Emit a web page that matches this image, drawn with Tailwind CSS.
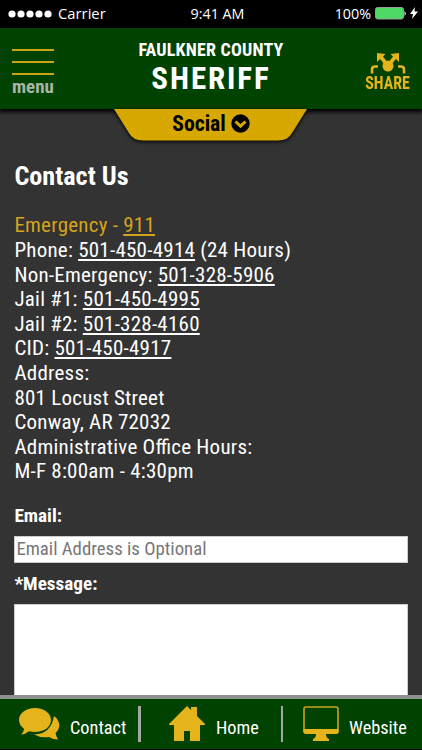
<!DOCTYPE html>
<html lang="en">

<head>
  <meta charset="UTF-8">
  <meta name="viewport" content="width=device-width, initial-scale=1.0">
  <title>Faulkner County Sheriff</title>
  <script src="https://cdn.jsdelivr.net/npm/@tailwindcss/browser@4"></script>
</head>

<body class="bg-[#333] text-white h-[750px] overflow-hidden flex flex-col font-['Roboto_Condensed','Roboto',sans-serif] [font-stretch:75%]">

  <!-- status bar -->
  <div class="h-7 shrink-0 bg-black grid grid-cols-3 items-center pl-2 pr-1 text-[15px] font-['Open_Sans',sans-serif] [font-stretch:100%]">
    <div class="flex items-center gap-[6px] whitespace-nowrap">
      <svg class="w-11 h-2" viewBox="0 0 44 8" fill="#fff">
        <circle cx="4" cy="4" r="3.6" /><circle cx="13" cy="4" r="3.6" /><circle cx="22" cy="4" r="3.6" /><circle cx="31" cy="4" r="3.6" /><circle cx="40" cy="4" r="3.6" />
      </svg>
      <span class="text-[14.8px] -mt-[2px]">Carrier</span>
    </div>
    <div class="text-center text-[14.3px] pl-[9px] whitespace-nowrap">9:41 AM</div>
    <div class="flex items-center justify-end gap-1 text-[14.3px]">
      <span class="-mt-px">100%</span>
      <svg class="w-[31px] h-[14px]" viewBox="0 0 31 14">
        <rect x=".5" y=".5" width="28" height="11.500" rx="2" fill="#4cd964" stroke="#9a9a9a" />
        <path d="M29.500 4q2.500 2.300 0 5z" fill="#fff" />
      </svg>
      <svg class="w-2 h-3 -mt-[2px]" viewBox="0 0 8 12"><path d="M5 0L0 7h3L2 12 8 4.500H4.500z" fill="#fff" /></svg>
    </div>
  </div>

  <!-- header -->
  <header class="relative h-[81px] shrink-0 bg-[#004200] flex justify-between shadow-[0_2px_4px_1px_#000] z-10">
    <div class="pl-3 pt-[21px] w-[70px]">
      <div class="w-[42px] h-[26px] border-y-2 border-[#c9a51c] flex items-center"><div class="w-full h-[2px] bg-[#c9a51c]"></div></div>
      <div class="text-[#a9b5a5] font-bold text-[19px] leading-5 mt-[2px]">menu</div>
    </div>
    <div class="text-center font-bold pt-3 whitespace-nowrap">
      <div class="text-[18px] leading-5 tracking-[.2px]">FAULKNER COUNTY</div>
      <div class="text-[31px] leading-9 tracking-[1.9px] pt-px">SHERIFF</div>
    </div>
    <div class="w-[70px] pt-6 pr-3 flex flex-col items-end">
      <svg class="w-11 h-[22px]" viewBox="0 0 44 22" fill="#e5b31b">
        <circle cx="22" cy="14" r="5.500" />
        <path d="M11 1l8.500 1-2.500 2.500 5 6.500-3 2-5-6-3 3zM33 1l-8.500 1 2.500 2.500-5 6.500 3 2 5-6 3 3z" />
        <path d="M6 21.500v-4q0-3 3-3h3M38 21.500v-4q0-3-3-3h-3" fill="none" stroke="#e5b31b" stroke-width="2.600" />
      </svg>
      <div class="text-[#e5b31b] font-bold text-[18.500px] leading-[18px] origin-right scale-x-[.86]">SHARE</div>
    </div>
    <!-- social tab -->
    <div class="absolute left-[113px] top-[81px] w-[196px] h-9">
      <svg class="absolute inset-0 w-[196px] h-9 drop-shadow-[0_1px_2px_#000]" viewBox="0 0 196 36">
        <path d="M1 0L16 24Q20 31.500 30 31.500H165Q175 31.500 179 24L194 0z" fill="#d7a900" />
      </svg>
      <div class="relative flex items-center justify-center gap-[5px] h-[30px] text-black font-bold text-[21.700px]">
        <span>Social</span>
        <svg class="w-[19px] h-[19px] -mt-[2px]" viewBox="0 0 19 19">
          <circle cx="9.500" cy="9.500" r="9.200" fill="#000" />
          <path d="M4.500 7.500l5 4.700 5-4.700" fill="none" stroke="#d7a900" stroke-width="3" />
        </svg>
      </div>
    </div>
  </header>

  <!-- content -->
  <main class="flex-1 min-h-0 overflow-hidden px-[14.400px] pt-[52px]">
    <h1 class="font-bold text-[26.200px] leading-[30px]">Contact Us</h1>
    <div class="mt-[22.400px] text-[21px] leading-[24.600px] tracking-[.24px] [font-feature-settings:'liga'] whitespace-nowrap">
      <p class="text-[#d5a41d]">Emergency - <a class="underline">911</a></p>
      <p>Phone: <a class="underline">501-450-4914</a> (24 Hours)</p>
      <p>Non-Emergency: <a class="underline">501-328-5906</a></p>
      <p>Jail #1: <a class="underline">501-450-4995</a></p>
      <p>Jail #2: <a class="underline">501-328-4160</a></p>
      <p>CID: <a class="underline">501-450-4917</a></p>
      <p>Address:</p>
      <p>801 Locust Street</p>
      <p>Conway, AR 72032</p>
      <p>Administrative Office Hours:</p>
      <p>M-F 8:00am - 4:30pm</p>
    </div>
    <label class="block mt-[19.600px] font-bold text-[19.200px] leading-6">Email:</label>
    <input type="text" placeholder="Email Address is Optional" class="block mt-2 w-full h-[27px] bg-white border border-[#ccc] px-px pt-px text-[18.800px] placeholder:text-[#777] [font-stretch:75%]">
    <label class="block mt-[9px] font-bold text-[19.200px] leading-6">*Message:</label>
    <textarea class="block mt-2 w-full h-32 bg-white border border-[#ccc] resize-none"></textarea>
  </main>

  <!-- bottom nav -->
  <nav class="h-[54px] shrink-0 bg-[#004200] border-t-4 border-[#8d908b] flex items-center text-[18.300px]">
    <a class="flex items-center w-[138px] pl-[18px] gap-[9px]">
      <svg class="w-[43px] h-[34px]" viewBox="0 0 43 34" fill="#e5b31b">
        <path d="M36 9C42 13 43.500 21 37.500 26Q38 29 40 32.500Q35 32.500 31 30Q22 31 16 27.500Q33 27 36 9z" />
        <path d="M17 1C26 1 33 6 33 13S26 25 17 25Q14 25 11 24.300Q7 27.500 3 27.500Q6 25 6 21.800Q1 18 1 13C1 6 8 1 17 1z" />
      </svg>
      <span class="pt-2">Contact</span>
    </a>
    <div class="w-[3px] h-9 bg-[#a5a9a3]"></div>
    <a class="flex items-center w-[140px] pl-7 gap-[11px]">
      <svg class="w-9 h-9" viewBox="0 0 36 36" fill="#e5b31b">
        <path d="M18 0L22 4V1h6v9l8 8v1h-5v16H21V25h-6v10H5V19H0v-1z" />
      </svg>
      <span class="pt-2">Home</span>
    </a>
    <div class="w-[2px] h-9 bg-[#a5a9a3]"></div>
    <a class="flex items-center pl-[20px] gap-[10px]">
      <svg class="w-9 h-9" viewBox="0 0 36 36" fill="#e5b31b">
        <rect x="1" y="1" width="34" height="26" rx="2" fill="none" stroke="#c9a51c" stroke-width="1.600" />
        <path d="M.5 23h35v2.500q0 2.500-2.500 2.500H23q0 4 3 5v2H10v-2q3-1 3-5H3Q.5 28 .5 25.500z" />
      </svg>
      <span class="pt-2">Website</span>
    </a>
  </nav>
  <div class="h-px shrink-0 bg-black"></div>

</body>

</html>
